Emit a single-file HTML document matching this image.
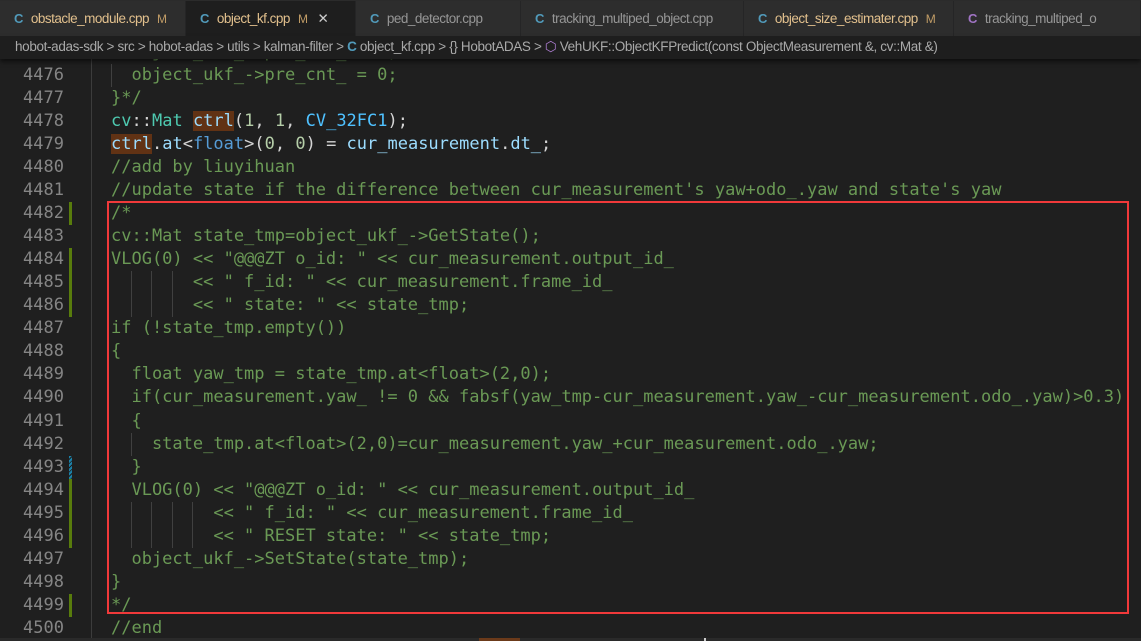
<!DOCTYPE html>
<html><head><meta charset="utf-8"><style>
*{margin:0;padding:0;box-sizing:border-box}
body{width:1141px;height:641px;background:#1f1f1f;overflow:hidden;position:relative;font-family:"Liberation Sans",sans-serif}
#tabs{position:absolute;left:0;top:0;width:1141px;height:36px;background:#252526;border-top:1px solid #2b2b2b}
.tab{position:absolute;top:0;height:36px;background:#2d2d2d;border-right:1px solid #252526;color:#969696;font-size:13.5px;letter-spacing:-0.5px;line-height:36px;padding-left:14px;white-space:nowrap;overflow:hidden}
.tab.act{background:#1e1e1e;color:#e2c08d}
.tab .ic{color:#519aba;font-weight:bold;margin-right:8px;font-size:13px}
.tab .m{margin-left:8px;font-size:12px;color:#c19c66}
.mod{color:#e2c08d}
#bc{position:absolute;left:0;top:36px;width:1141px;height:23px;background:#1e1e1e;color:#a9a9a9;font-size:13.5px;letter-spacing:-0.35px;line-height:22px;padding-left:15px;white-space:nowrap;box-shadow:0 3px 4px rgba(0,0,0,.5);z-index:3}
#code{position:absolute;left:0;top:41px;width:1141px}
.l{height:23.04px;line-height:23.04px;position:relative;white-space:pre;font-family:"DejaVu Sans Mono",monospace;font-size:17px;color:#6a9955}
.n{position:absolute;left:0;width:64px;text-align:right;color:#858585}
.t{position:absolute;left:111px}
.g{position:absolute;left:69px;width:3px;height:23px;background:#587c0c}
.g2{position:absolute;left:69px;width:3px;height:23px;background:repeating-linear-gradient(135deg,#1b81a8 0 2px,#1f1f1f 2px 3px)}
#sep{position:absolute;left:91px;top:59px;width:1px;height:582px;background:#3c3c3c}
.w{color:#d4d4d4}.ty{color:#4ec9b0}.v{color:#9cdcfe}.c{color:#4fc1ff}.nu{color:#b5cea8}.hl{background:#613214}
.ig{position:absolute;top:0;width:1px;height:23px;background:#404040}
#box{position:absolute;left:107px;top:201px;width:1022px;height:413px;border:2.5px solid #f0393a;z-index:2}
#bot{position:absolute;left:0;top:638px;width:1141px;height:3px;background:#2a2a2a}
</style></head><body>
<div id="tabs">
<div class="tab" style="left:0;width:186px"><span class="ic">C</span><span class="mod">obstacle_module.cpp</span><span class="m">M</span></div>
<div class="tab act" style="left:186px;width:170px"><span class="ic">C</span>object_kf.cpp<span class="m">M</span><span style="color:#ccc;margin-left:10px">✕</span></div>
<div class="tab" style="left:356px;width:165px"><span class="ic">C</span>ped_detector.cpp</div>
<div class="tab" style="left:521px;width:223px"><span class="ic">C</span>tracking_multiped_object.cpp</div>
<div class="tab" style="left:744px;width:210px"><span class="ic">C</span><span class="mod">object_size_estimater.cpp</span><span class="m">M</span></div>
<div class="tab" style="left:954px;width:187px"><span class="ic" style="color:#a074c4">C</span>tracking_multiped_o</div>
</div>
<div id="bc">hobot-adas-sdk &gt; src &gt; hobot-adas &gt; utils &gt; kalman-filter &gt; <span style="color:#519aba;font-weight:bold">C</span> object_kf.cpp &gt; {} HobotADAS &gt; <span style="color:#b180d7">⬡</span> VehUKF::ObjectKFPredict(const ObjectMeasurement &amp;, cv::Mat &amp;)</div>
<div id="sep"></div>
<div id="code">
<div class="l"><span class="n">4475</span><span class="t">  object_ukf_-&gt;pre_cnt_ = 0;</span></div>
<div class="l"><span class="n">4476</span><span class="ig" style="left:111px"></span><span class="t">  object_ukf_-&gt;pre_cnt_ = 0;</span></div>
<div class="l"><span class="n">4477</span><span class="t">}*/</span></div>
<div class="l"><span class="n">4478</span><span class="t"><span class="ty">cv</span><span class="w">::</span><span class="ty">Mat</span> <span class="v hl">ctrl</span><span class="w">(</span><span class="nu">1</span><span class="w">, </span><span class="nu">1</span><span class="w">, </span><span class="c">CV_32FC1</span><span class="w">);</span></span></div>
<div class="l"><span class="n">4479</span><span class="t"><span class="v hl">ctrl</span><span class="w">.</span><span class="v">at</span><span class="w">&lt;</span><span class="c" style="color:#569cd6">float</span><span class="w">&gt;(</span><span class="nu">0</span><span class="w">, </span><span class="nu">0</span><span class="w">) = </span><span class="v">cur_measurement</span><span class="w">.</span><span class="v">dt_</span><span class="w">;</span></span></div>
<div class="l"><span class="n">4480</span><span class="t">//add by liuyihuan</span></div>
<div class="l"><span class="n">4481</span><span class="t">//update state if the difference between cur_measurement's yaw+odo_.yaw and state's yaw</span></div>
<div class="l"><span class="n">4482</span><span class="g"></span><span class="t">/*</span></div>
<div class="l"><span class="n">4483</span><span class="t">cv::Mat state_tmp=object_ukf_-&gt;GetState();</span></div>
<div class="l"><span class="n">4484</span><span class="g"></span><span class="t">VLOG(0) &lt;&lt; "@@@ZT o_id: " &lt;&lt; cur_measurement.output_id_</span></div>
<div class="l"><span class="n">4485</span><span class="g"></span><span class="ig" style="left:131px"></span><span class="ig" style="left:151px"></span><span class="ig" style="left:172px"></span><span class="t">        &lt;&lt; " f_id: " &lt;&lt; cur_measurement.frame_id_</span></div>
<div class="l"><span class="n">4486</span><span class="g"></span><span class="ig" style="left:131px"></span><span class="ig" style="left:151px"></span><span class="ig" style="left:172px"></span><span class="t">        &lt;&lt; " state: " &lt;&lt; state_tmp;</span></div>
<div class="l"><span class="n">4487</span><span class="t">if (!state_tmp.empty())</span></div>
<div class="l"><span class="n">4488</span><span class="t">{</span></div>
<div class="l"><span class="n">4489</span><span class="t">  float yaw_tmp = state_tmp.at&lt;float&gt;(2,0);</span></div>
<div class="l"><span class="n">4490</span><span class="t">  if(cur_measurement.yaw_ != 0 &amp;&amp; fabsf(yaw_tmp-cur_measurement.yaw_-cur_measurement.odo_.yaw)&gt;0.3)</span></div>
<div class="l"><span class="n">4491</span><span class="t">  {</span></div>
<div class="l"><span class="n">4492</span><span class="ig" style="left:131px"></span><span class="t">    state_tmp.at&lt;float&gt;(2,0)=cur_measurement.yaw_+cur_measurement.odo_.yaw;</span></div>
<div class="l"><span class="n">4493</span><span class="g2"></span><span class="t">  }</span></div>
<div class="l"><span class="n">4494</span><span class="g"></span><span class="t">  VLOG(0) &lt;&lt; "@@@ZT o_id: " &lt;&lt; cur_measurement.output_id_</span></div>
<div class="l"><span class="n">4495</span><span class="g"></span><span class="ig" style="left:131px"></span><span class="ig" style="left:151px"></span><span class="ig" style="left:172px"></span><span class="ig" style="left:192px"></span><span class="t">          &lt;&lt; " f_id: " &lt;&lt; cur_measurement.frame_id_</span></div>
<div class="l"><span class="n">4496</span><span class="g"></span><span class="ig" style="left:131px"></span><span class="ig" style="left:151px"></span><span class="ig" style="left:172px"></span><span class="ig" style="left:192px"></span><span class="t">          &lt;&lt; " RESET state: " &lt;&lt; state_tmp;</span></div>
<div class="l"><span class="n">4497</span><span class="t">  object_ukf_-&gt;SetState(state_tmp);</span></div>
<div class="l"><span class="n">4498</span><span class="t">}</span></div>
<div class="l"><span class="n">4499</span><span class="g"></span><span class="t">*/</span></div>
<div class="l"><span class="n">4500</span><span class="t">//end</span></div>
</div>
<div id="box"></div>
<div id="bot"><div style="position:absolute;left:479px;width:41px;height:3px;background:#6b3a1a"></div><div style="position:absolute;left:704px;width:2px;height:3px;background:#ccc"></div></div>
</body></html>
